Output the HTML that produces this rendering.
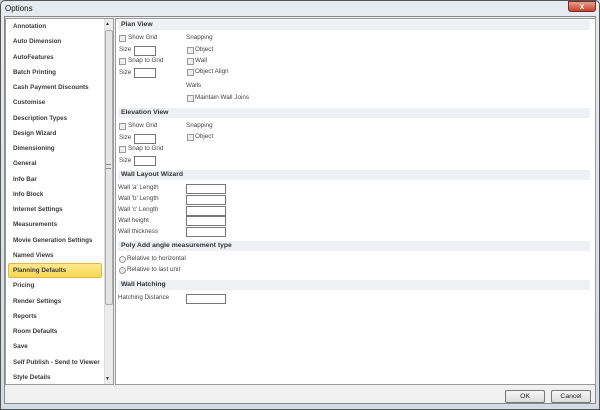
<!DOCTYPE html>
<html><head><style>
*{margin:0;padding:0;box-sizing:border-box}
body{width:600px;height:410px;overflow:hidden;background:#c9d3de;font-family:"Liberation Sans",sans-serif;position:relative}
.a{position:absolute}
.frame{left:0;top:0;width:600px;height:410px;background:linear-gradient(#e6ebf1,#d3dbe4);border:1px solid #555;border-radius:5px 5px 0 0}
.title{left:5px;top:4px;font-size:8px;color:#111}
.inner{left:4px;top:16px;width:592px;height:388px;background:#f0f0f0;border:1px solid #8a8a8a}
.list{left:5px;top:18px;width:109px;height:367px;background:#fff;border:1px solid #9a9a9a}
.li{position:absolute;left:13px;font-size:6.3px;font-weight:bold;color:#3a3a3a;white-space:nowrap}
.sb{left:104px;top:19px;width:9px;height:365px;background:#ececec;border-left:1px solid #ddd}
.thumb{left:105px;top:30px;width:8px;height:275px;background:#e4e4e4;border:1px solid #aaa;border-radius:2px}
.hl{left:8px;top:263px;width:94px;height:15px;background:linear-gradient(#fde98d,#f9d654);border:1px solid #e2b84a;border-radius:2px}
.right{left:115px;top:18px;width:481px;height:367px;background:#fff;border:1px solid #9a9a9a}
.hd{position:absolute;left:118px;width:472px;height:10px;background:#eef0f3;font-size:6.8px;font-weight:bold;color:#333;padding-left:3px;line-height:10px}
.t{position:absolute;font-size:6.3px;color:#444;white-space:nowrap}
.cb{position:absolute;width:7px;height:7px;border:1px solid #999;background:#eee}
.tb{position:absolute;width:22px;height:10px;border:1px solid #777;background:#fff}
.tb2{position:absolute;width:40px;height:10px;border:1px solid #777;background:#fff}
.rb{position:absolute;width:7px;height:7px;border:1px solid #999;border-radius:50%;background:#eee}
.btn{position:absolute;top:390px;width:40px;height:13px;border:1px solid #777;border-radius:2px;background:linear-gradient(#f6f6f6,#dcdcdc);font-size:6.8px;text-align:center;line-height:11px;color:#222}
</style></head><body>
<div class="a frame"></div>
<div class="a title">Options</div>
<div class="a" style="left:568px;top:1px;width:28px;height:11px;background:linear-gradient(#e8a090,#c4402a);border:1px solid #7a2a20;border-radius:0 0 3px 3px;color:#fff;font-size:8px;text-align:center;line-height:9px;font-weight:bold">x</div>
<div class="a inner"></div>
<div class="a list"></div>
<div class="a sb"></div>
<div class="a thumb"></div>
<div class="a" style="left:105px;top:21px;font-size:5px;color:#333">▲</div>
<div class="a" style="left:105px;top:376px;font-size:5px;color:#333">▼</div>
<div class="a" style="left:106px;top:164px;width:5px;height:5px;border-top:1px solid #888;border-bottom:1px solid #888"></div>
<div class="a hl"></div>
<div class="li" style="top:23px">Annotation</div>
<div class="li" style="top:38px">Auto Dimension</div>
<div class="li" style="top:54px">AutoFeatures</div>
<div class="li" style="top:69px">Batch Printing</div>
<div class="li" style="top:84px">Cash Payment Discounts</div>
<div class="li" style="top:99px">Customise</div>
<div class="li" style="top:115px">Description Types</div>
<div class="li" style="top:130px">Design Wizard</div>
<div class="li" style="top:145px">Dimensioning</div>
<div class="li" style="top:160px">General</div>
<div class="li" style="top:176px">Info Bar</div>
<div class="li" style="top:191px">Info Block</div>
<div class="li" style="top:206px">Internet Settings</div>
<div class="li" style="top:221px">Measurements</div>
<div class="li" style="top:237px">Movie Generation Settings</div>
<div class="li" style="top:252px">Named Views</div>
<div class="li" style="top:267px">Planning Defaults</div>
<div class="li" style="top:282px">Pricing</div>
<div class="li" style="top:298px">Render Settings</div>
<div class="li" style="top:313px">Reports</div>
<div class="li" style="top:328px">Room Defaults</div>
<div class="li" style="top:343px">Save</div>
<div class="li" style="top:359px">Self Publish - Send to Viewer</div>
<div class="li" style="top:374px">Style Details</div>

<div class="a right"></div>
<div class="hd" style="top:20px">Plan View</div>
<div class="cb" style="left:119px;top:35px"></div><div class="t" style="left:128px;top:34px">Show Grid</div>
<div class="t" style="left:119px;top:46px">Size</div><div class="tb" style="left:134px;top:46px"></div>
<div class="cb" style="left:119px;top:58px"></div><div class="t" style="left:128px;top:57px">Snap to Grid</div>
<div class="t" style="left:119px;top:69px">Size</div><div class="tb" style="left:134px;top:68px"></div>
<div class="t" style="left:186px;top:34px">Snapping</div>
<div class="cb" style="left:187px;top:47px"></div><div class="t" style="left:195px;top:46px">Object</div>
<div class="cb" style="left:187px;top:58px"></div><div class="t" style="left:195px;top:57px">Wall</div>
<div class="cb" style="left:187px;top:69px"></div><div class="t" style="left:195px;top:68px">Object Align</div>
<div class="t" style="left:186px;top:82px">Walls</div>
<div class="cb" style="left:187px;top:95px"></div><div class="t" style="left:195px;top:94px">Maintain Wall Joins</div>

<div class="hd" style="top:108px">Elevation View</div>
<div class="cb" style="left:119px;top:123px"></div><div class="t" style="left:128px;top:122px">Show Grid</div>
<div class="t" style="left:119px;top:134px">Size</div><div class="tb" style="left:134px;top:134px"></div>
<div class="cb" style="left:119px;top:146px"></div><div class="t" style="left:128px;top:145px">Snap to Grid</div>
<div class="t" style="left:119px;top:157px">Size</div><div class="tb" style="left:134px;top:156px"></div>
<div class="t" style="left:186px;top:122px">Snapping</div>
<div class="cb" style="left:187px;top:134px"></div><div class="t" style="left:195px;top:133px">Object</div>

<div class="hd" style="top:170px">Wall Layout Wizard</div>
<div class="t" style="left:118px;top:184px">Wall 'a' Length</div><div class="tb2" style="left:186px;top:184px"></div>
<div class="t" style="left:118px;top:195px">Wall 'b' Length</div><div class="tb2" style="left:186px;top:195px"></div>
<div class="t" style="left:118px;top:206px">Wall 'c' Length</div><div class="tb2" style="left:186px;top:206px"></div>
<div class="t" style="left:118px;top:217px">Wall height</div><div class="tb2" style="left:186px;top:216px"></div>
<div class="t" style="left:118px;top:228px">Wall thickness</div><div class="tb2" style="left:186px;top:227px"></div>

<div class="hd" style="top:241px">Poly Add angle measurement type</div>
<div class="rb" style="left:119px;top:256px"></div><div class="t" style="left:127px;top:255px">Relative to horizontal</div>
<div class="rb" style="left:119px;top:267px"></div><div class="t" style="left:127px;top:266px">Relative to last unit</div>

<div class="hd" style="top:280px">Wall Hatching</div>
<div class="t" style="left:118px;top:294px">Hatching Distance</div><div class="tb2" style="left:186px;top:294px"></div>

<div class="btn" style="left:505px">OK</div>
<div class="btn" style="left:551px">Cancel</div>
</body></html>
